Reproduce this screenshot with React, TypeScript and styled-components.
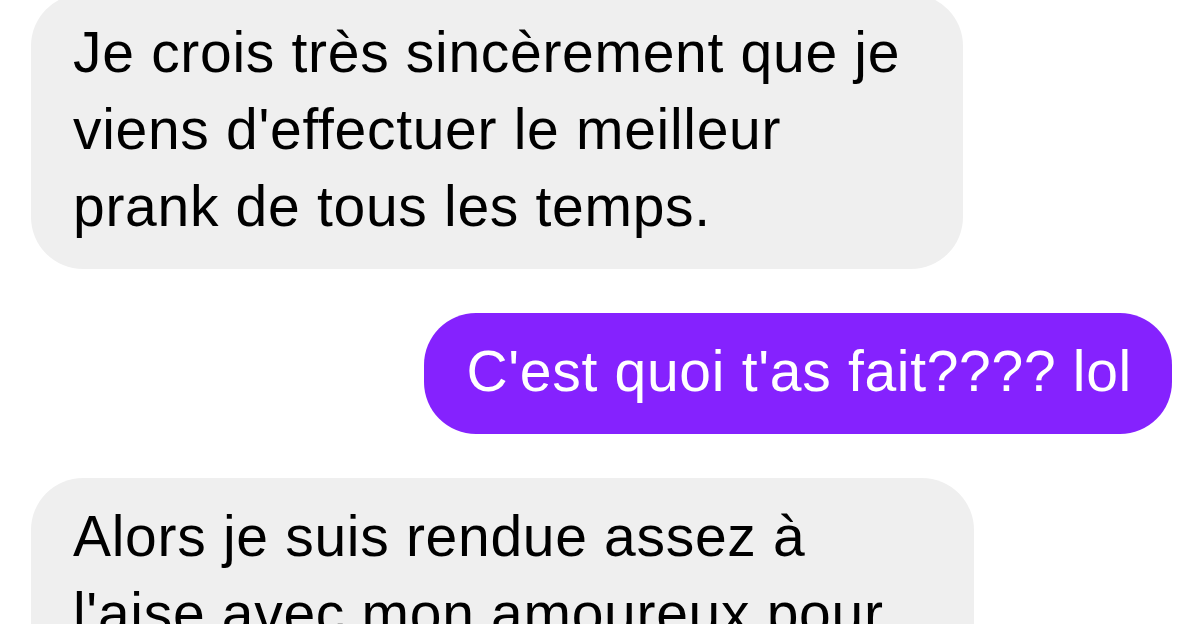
import React from "react";
import styled, { createGlobalStyle } from "styled-components";

const Global = createGlobalStyle`
  html, body { margin: 0; padding: 0; background: #ffffff; }
  body { font-family: "Liberation Sans", Arial, sans-serif; overflow: hidden; }
`;

const Thread = styled.div`
  width: 1200px;
  height: 630px;
  overflow: hidden;
  display: flex;
  flex-direction: column;
  gap: 44px;
  padding: 0 28px 0 31px;
  box-sizing: border-box;
  margin-top: -6px;
`;

const Row = styled.div<{ $mine?: boolean }>`
  display: flex;
  justify-content: ${(p) => (p.$mine ? "flex-end" : "flex-start")};
`;

const Bubble = styled.div<{ $mine?: boolean; $width?: number }>`
  box-sizing: border-box;
  width: ${(p) => (p.$width ? `${p.$width}px` : "auto")};
  flex: none;
  padding: 20px 40px 24px 42px;
  border-radius: 52px;
  background: ${(p) => (p.$mine ? "#8522fe" : "#efefef")};
  color: ${(p) => (p.$mine ? "#ffffff" : "#000000")};
  font-size: 57px;
  line-height: 77px;
  letter-spacing: 0.7px;
  white-space: nowrap;
`;

const Line = styled.div``;

export default function App() {
  return (
    <>
      <Global />
      <Thread>
        <Row>
          <Bubble $width={932}>
            <Line>Je crois très sincèrement que je</Line>
            <Line>viens d'effectuer le meilleur</Line>
            <Line>prank de tous les temps.</Line>
          </Bubble>
        </Row>
        <Row $mine>
          <Bubble $mine>
            <Line>C'est quoi t'as fait???? lol</Line>
          </Bubble>
        </Row>
        <Row>
          <Bubble $width={943}>
            <Line>Alors je suis rendue assez à</Line>
            <Line>l'aise avec mon amoureux pour</Line>
          </Bubble>
        </Row>
      </Thread>
    </>
  );
}
